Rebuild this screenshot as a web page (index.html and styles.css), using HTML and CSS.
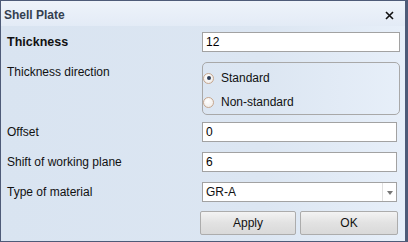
FILE: index.html
```html
<!DOCTYPE html>
<html lang="en">
<head>
  <meta charset="UTF-8">
  <title>Shell Plate</title>
  <link rel="stylesheet" href="styles.css">
</head>
<body>
  <div class="dialog">
    <div class="title-bar">
      <span class="title">Shell Plate</span>
      <svg class="close" width="9" height="9" viewBox="0 0 9 9">
        <path d="M1 1 L8 8 M8 1 L1 8" stroke="#111" stroke-width="1.6" fill="none"/>
      </svg>
    </div>
    <div class="content">
      <div class="row">
        <label class="label bold" for="thickness">Thickness</label>
        <input class="field wide" type="text" id="thickness" value="12">
      </div>
      <div class="row top gap-10">
        <span class="label pad">Thickness direction</span>
        <div class="group">
          <div class="radio-row">
            <span class="radio checked"></span>
            <span>Standard</span>
          </div>
          <div class="radio-row">
            <span class="radio"></span>
            <span>Non-standard</span>
          </div>
        </div>
      </div>
      <div class="row gap-7">
        <label class="label" for="offset">Offset</label>
        <input class="field" type="text" id="offset" value="0">
      </div>
      <div class="row gap-10">
        <label class="label" for="shift">Shift of working plane</label>
        <input class="field" type="text" id="shift" value="6">
      </div>
      <div class="row gap-10">
        <span class="label">Type of material</span>
        <div class="select">
          <span class="select-value">GR-A</span>
          <span class="select-btn"><span class="arrow"></span></span>
        </div>
      </div>
      <div class="buttons">
        <button class="btn apply">Apply</button>
        <button class="btn ok">OK</button>
      </div>
    </div>
  </div>
</body>
</html>
```

FILE: styles.css
```css
html {
  background: #4e5b78;
}

body {
  margin: 0;
  padding: 0;
  width: 408px;
  height: 242px;
  font-family: 'Liberation Sans', Arial, sans-serif;
  font-size: 12px;
  color: #111;
}

.dialog {
  width: 404px;
  height: 240px;
  border: 1px solid #4e5b78;
  border-right: none;
  background: linear-gradient(to right, #d9e4f1 0%, #dce6f2 65%, #e7eff9 100%);
  display: flex;
  flex-direction: column;
}

.title-bar {
  height: 25px;
  display: flex;
  align-items: center;
  justify-content: space-between;
  padding: 0 11px 0 3px;
  background: linear-gradient(to bottom, #eef3fa, #e3ebf6);
}

.title {
  font-weight: bold;
  font-size: 12px;
  color: #34404f;
  margin-top: 2px;
}

.close {
  margin-top: 4px;
}

.content {
  padding: 6px 0 0 6px;
  display: flex;
  flex-direction: column;
}

.row {
  display: flex;
  align-items: center;
}

.row.top {
  align-items: flex-start;
}

.gap-10 {
  margin-top: 10px;
}

.gap-7 {
  margin-top: 7px;
}

.label {
  width: 195px;
  flex-shrink: 0;
}

.label.bold {
  font-weight: bold;
  font-size: 12.5px;
}

.label.pad {
  padding-top: 3px;
}

.field {
  box-sizing: border-box;
  width: 195px;
  height: 20px;
  margin: 0;
  padding: 0 3px;
  border: 1px solid #a2a2a2;
  background: #fff;
  font-family: inherit;
  font-size: 12px;
  color: #000;
  outline: none;
}

.field.wide {
  width: 198px;
}

.group {
  box-sizing: border-box;
  width: 198px;
  height: 53px;
  border: 1px solid #a8a8a8;
  border-radius: 5px;
  padding: 3px 0 0 0;
}

.radio-row {
  display: flex;
  align-items: center;
  height: 24px;
  gap: 7px;
}

.radio {
  box-sizing: border-box;
  width: 11px;
  height: 11px;
  border: 1px solid #c7a78f;
  border-radius: 50%;
  background: radial-gradient(circle at 40% 35%, #ffffff, #ece8e4);
  display: flex;
  align-items: center;
  justify-content: center;
}

.radio.checked::after {
  content: "";
  width: 4px;
  height: 4px;
  border-radius: 50%;
  background: #2d3d57;
}

.select {
  box-sizing: border-box;
  width: 195px;
  height: 20px;
  border: 1px solid #a2a2a2;
  background: #fff;
  display: flex;
  align-items: center;
}

.select-value {
  flex: 1;
  padding-left: 3px;
}

.select-btn {
  width: 13px;
  height: 100%;
  border-left: 1px solid #e0e0e0;
  display: flex;
  align-items: center;
  justify-content: center;
}

.arrow {
  width: 0;
  height: 0;
  border-left: 3px solid transparent;
  border-right: 3px solid transparent;
  border-top: 4px solid #777;
  margin-top: 1px;
}

.buttons {
  display: flex;
  gap: 4px;
  margin-top: 9px;
  padding-left: 193px;
}

.btn {
  box-sizing: border-box;
  height: 24px;
  border: 1px solid #acacac;
  border-radius: 2px;
  background: linear-gradient(to bottom, #f3f3f3, #e2e2e2 50%, #d9d9d9);
  font-family: inherit;
  font-size: 12px;
  color: #111;
  padding: 0;
}

.apply {
  width: 96px;
}

.ok {
  width: 98px;
}
```
